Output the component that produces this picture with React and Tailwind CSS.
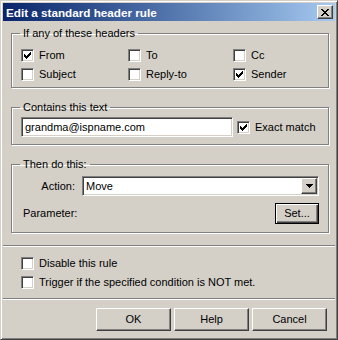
const raised =
  "border border-t-white border-l-white border-r-[#404040] border-b-[#404040] shadow-[inset_-1px_-1px_0_#808080]";
const sunken =
  "border border-t-[#808080] border-l-[#808080] border-r-white border-b-white shadow-[inset_1px_1px_0_#404040,inset_-1px_-1px_0_#d4d0c8]";
const etched = "border border-[#808080] shadow-[inset_1px_1px_0_#fff,1px_1px_0_#fff]";

function Check({ checked, label }) {
  return (
    <label className="flex items-center gap-[5px]">
      <span className={`w-[13px] h-[13px] shrink-0 bg-white flex items-center justify-center ${sunken}`}>
        {checked && (
          <svg width="7" height="7" viewBox="0 0 7 7" shapeRendering="crispEdges">
            <path
              d="M0 2h1v3H0zM1 3h1v3H1zM2 4h1v3H2zM3 3h1v3H3zM4 2h1v3H4zM5 1h1v3H5zM6 0h1v3H6z"
              fill="#000"
            />
          </svg>
        )}
      </span>
      <span>{label}</span>
    </label>
  );
}

function Group({ title, className = "", children }) {
  return (
    <fieldset className={`ml-[8px] w-[318px] ${etched} ${className}`}>
      <legend className="ml-[8px] px-[3px] leading-[13px]">{title}</legend>
      {children}
    </fieldset>
  );
}

function Btn({ children, className = "" }) {
  return (
    <button className={`h-[23px] w-[75px] bg-[#d4d0c8] ${raised} ${className}`}>{children}</button>
  );
}

export default function App() {
  return (
    <div className="w-[338px] h-[340px] bg-[#d4d0c8] font-['Liberation_Sans',Arial,sans-serif] text-[11px] leading-[13px] text-black select-none">
      <div className="h-full flex flex-col p-[2px] border border-t-[#d4d0c8] border-l-[#d4d0c8] border-r-[#404040] border-b-[#404040] shadow-[inset_1px_1px_0_#fff,inset_-1px_-1px_0_#808080]">
        {/* Title bar */}
        <div className="h-[18px] shrink-0 flex items-center justify-between pl-[3px] pr-[2px] bg-gradient-to-r from-[#0a246a] to-[#a6caf0]">
          <span className="text-white font-bold text-[11.7px]">Edit a standard header rule</span>
          <button className={`w-[16px] h-[14px] bg-[#d4d0c8] flex items-center justify-center ${raised}`}>
            <svg width="8" height="7" viewBox="0 0 8 7" shapeRendering="crispEdges">
              <path
                d="M0 0h2v1H0zM6 0h2v1H6zM1 1h2v1H1zM5 1h2v1H5zM2 2h4v1H2zM3 3h2v1H3zM2 4h4v1H2zM1 5h2v1H1zM5 5h2v1H5zM0 6h2v1H0zM6 6h2v1H6z"
                fill="#000"
              />
            </svg>
          </button>
        </div>

        {/* Headers */}
        <Group title="If any of these headers" className="mt-[6px]">
          <div className="grid grid-cols-[107px_105px_1fr] gap-y-[6px] px-[9px] pt-[9px] pb-[6px]">
            <Check checked label="From" />
            <Check label="To" />
            <Check label="Cc" />
            <Check label="Subject" />
            <Check label="Reply-to" />
            <Check checked label="Sender" />
          </div>
        </Group>

        {/* Text */}
        <Group title="Contains this text" className="mt-[13px]">
          <div className="flex items-center gap-[4px] px-[9px] pt-[3px] pb-[7px]">
            <div className={`w-[212px] h-[20px] bg-white flex items-center pl-[3px] ${sunken}`}>
              grandma@ispname.com
            </div>
            <Check checked label="Exact match" />
          </div>
        </Group>

        {/* Action */}
        <Group title="Then do this:" className="mt-[13px]">
          <div className="flex flex-col gap-[7px] px-[9px] pt-[5px] pb-[8px]">
            <div className="flex items-center">
              <span className="w-[54px] text-right">Action:</span>
              <div className={`ml-[7px] w-[237px] h-[20px] bg-white flex items-center justify-between pl-[3px] p-[1px] ${sunken}`}>
                <span>Move</span>
                <span className={`w-[16px] h-[16px] bg-[#d4d0c8] flex items-center justify-center ${raised}`}>
                  <svg width="7" height="4" viewBox="0 0 7 4" shapeRendering="crispEdges">
                    <path d="M0 0h7v1H0zM1 1h5v1H1zM2 2h3v1H2zM3 3h1v1H3z" fill="#000" />
                  </svg>
                </span>
              </div>
            </div>
            <div className="flex items-center justify-between">
              <span className="pl-[2px]">Parameter:</span>
              <button className="w-[44px] h-[21px] bg-[#d4d0c8] border border-black shadow-[inset_1px_1px_0_#fff,inset_-1px_-1px_0_#404040,inset_-2px_-2px_0_#808080]">
                Set...
              </button>
            </div>
          </div>
        </Group>

        <div className="mt-[12px] border-t border-t-[#808080] border-b border-b-white" />

        <div className="flex flex-col gap-[6px] pl-[18px] mt-[10px]">
          <Check label="Disable this rule" />
          <Check label="Trigger if the specified condition is NOT met." />
        </div>

        <div className="mt-[9px] border-t border-t-[#808080] border-b border-b-white" />

        <div className="flex justify-end gap-[3px] pr-[8px] mt-[8px]">
          <Btn>OK</Btn>
          <Btn>Help</Btn>
          <Btn>Cancel</Btn>
        </div>
      </div>
    </div>
  );
}
